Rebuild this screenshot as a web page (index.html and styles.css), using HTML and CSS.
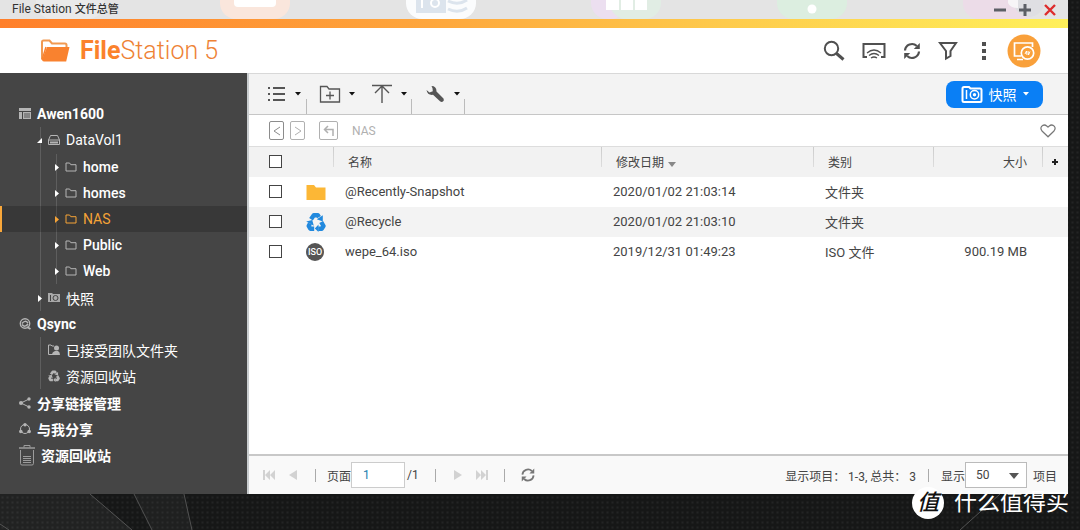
FILE: index.html
```html
<!DOCTYPE html>
<html lang="zh-CN">
<head>
<meta charset="utf-8">
<title>File Station 文件总管</title>
<link rel="stylesheet" href="styles.css">
</head>
<body>
<svg class="defs" width="0" height="0" aria-hidden="true">
  <symbol id="caret" viewBox="0 0 6 4"><path d="M0 0h6L3 3.6z" fill="currentColor"/></symbol>
  <symbol id="folder" viewBox="0 0 12 12"><path d="M1 10V2h3.6l1.2 1.7H11V10z" fill="none" stroke="currentColor"/></symbol>
  <symbol id="closed" viewBox="0 0 8 10"><path d="M4 2l4 3.500L4 9z" fill="currentColor"/></symbol>
  <symbol id="open" viewBox="0 0 8 10"><path d="M8 3v5H3z" fill="currentColor"/></symbol>
  <symbol id="refresh" viewBox="0 0 20 20"><g fill="none" stroke="currentColor" stroke-width="2.200"><path d="M3 9.500a7 7 0 0 1 11.800-4.500M17 10.500a7 7 0 0 1-11.800 4.500"/></g><path d="M17.800 2v6h-6zM2.200 18v-6h6z" fill="currentColor"/></symbol>
  <symbol id="camera" viewBox="0 0 22 18"><g fill="none" stroke="currentColor"><path stroke-width="2" d="M3 2h5l1.500 1.500H19q1.500 0 1.500 1.500v10.500q0 1.500-1.500 1.500H3q-1.500 0-1.500-1.500v-12Q1.500 2 3 2z"/><path stroke-width="1.500" d="M5.500 5v9"/><circle cx="13.500" cy="9.800" r="4.200" stroke-width="1.500"/></g><circle cx="13.500" cy="9.800" r="1.700" fill="currentColor"/></symbol>
  <symbol id="recycle" viewBox="0 0 20 20"><g fill="none" stroke="currentColor" stroke-width="4.400" stroke-linejoin="round"><path d="M5 7.200L7.800 3.200h4L13 5.200"/><path d="M15.200 10l2.300 4-1.800 2.700h-3.500"/><path d="M8.200 16.700H4.300L2.700 14l1.300-2.500"/></g><path d="M16.800 3.200v6.200l-6-2.200zM12.500 12.500v7.500l-3.700-3.500zM.2 9.500l6-1.500 1.600 5.800z" fill="currentColor"/></symbol>
</svg>

<div class="window">
  <header class="titlebar">
    <svg class="ghosts" viewBox="0 0 1068 19" preserveAspectRatio="xMinYMin slice" aria-hidden="true">
      <rect x="36" y="-40" width="68" height="59" rx="16" fill="#eaeaea"/>
      <rect x="220" y="-50" width="70" height="69" rx="16" fill="#fae6dc"/><rect x="234" y="-10" width="42" height="17" rx="4" fill="#fff"/>
      <rect x="406" y="-50" width="70" height="69" rx="16" fill="#fbfcfd"/><path d="M416 0h30v13h-30z" fill="#dce4ed"/><path d="M422 0v8" stroke="#fff" stroke-width="2"/><circle cx="435" cy="3" r="4" fill="none" stroke="#fff" stroke-width="2"/><path d="M448 1q10 5 19-1M448 9q10 5 19-1" fill="none" stroke="#dce4ed" stroke-width="3"/>
      <rect x="591" y="-50" width="36" height="69" rx="16" fill="#ecdff0"/><rect x="610" y="-50" width="51" height="69" rx="16" fill="#e1ede4"/><path d="M606 0h13v10h-13zM621 0h12v10h-12zM635 0h12v10h-12z" fill="#fff"/>
      <rect x="777" y="-50" width="70" height="69" rx="16" fill="#dceee0"/><circle cx="812" cy="9" r="4.500" fill="#fff"/>
      <rect x="963" y="-50" width="76" height="69" rx="16" fill="#ecdce8"/><circle cx="1029" cy="2" r="15" fill="#dfdfe3"/><path d="M1008 0h10v8q-8 0-10-5z" fill="#f7f5f7"/>
    </svg>
    <h1 class="title">File Station <b>文件总管</b></h1>
    <div class="controls">
      <button aria-label="最小化"><svg width="12" height="12"><path d="M0 6h12" stroke="#5c5f66" stroke-width="3"/></svg></button>
      <button aria-label="最大化"><svg width="12" height="12"><path d="M0 6h12M6 0v12" stroke="#5c5f66" stroke-width="3"/></svg></button>
      <button aria-label="关闭"><svg width="12" height="12"><path d="M1 1l10 10M11 1L1 11" stroke="#dd2c2c" stroke-width="2.400"/></svg></button>
    </div>
  </header>
  <div class="stripe"></div>

  <div class="brandbar">
    <div class="brand">
      <svg width="30" height="24" viewBox="0 0 30 24"><path d="M2 20V3q0-1.500 1.500-1.500h6L12 4.500h13q1.500 0 1.500 1.500v2" fill="none" stroke="#f19a52" stroke-width="2"/><path d="M7 8h22.500l-3.300 14.500H4q-2.200 0-1.600-2.500z" fill="#f9822f"/><path d="M2 21L6 8" stroke="#f9822f" stroke-width="1.500"/></svg>
      <span class="wordmark"><b>File</b>Station 5</span>
    </div>
    <div class="tools">
      <button class="wide" aria-label="搜索"><svg width="22" height="22" viewBox="0 0 22 22" fill="none" stroke="currentColor"><circle cx="8.500" cy="8.500" r="6.700" stroke-width="2"/><path d="M13.500 13.500l7 6" stroke-width="3"/></svg></button>
      <button class="wide" aria-label="投放"><svg width="24" height="18" viewBox="0 0 24 18" fill="none" stroke="currentColor"><path d="M5 15H1.500V2h21v13H19" stroke-width="2"/><path d="M5 11q7-6 14 0M7 13.500q5-4 10 0M9 16q3-2 6 0" stroke-width="1.300"/></svg></button>
      <button aria-label="刷新"><svg width="20" height="20"><use href="#refresh"/></svg></button>
      <button aria-label="筛选"><svg width="20" height="20" viewBox="0 0 20 20" fill="none" stroke="currentColor" stroke-width="2"><path d="M2 2h16l-5.500 8v5L8 17.500V10z"/></svg></button>
      <button aria-label="更多"><svg width="6" height="20" fill="currentColor"><path d="M1 1h4v4H1zM1 8h4v4H1zM1 15h4v4H1z"/></svg></button>
      <button class="remote" aria-label="远程连接"><svg width="34" height="34" viewBox="0 0 34 34" fill="none" stroke="#fff"><circle cx="17" cy="17" r="16.500" fill="#f9a03a" stroke="none"/><path d="M14 22H7.500V9h18v4M10 25.500h6" stroke-width="1.700"/><circle cx="20.500" cy="19" r="6.200" stroke-width="1.700" fill="#f9a03a"/><path d="M18 20l1.500-3 .5 4M21 17l.5 4 1.500-3.500" stroke-width="1"/></svg></button>
    </div>
  </div>

  <div class="workspace">
    <nav class="sidebar" aria-label="文件夹">
      <ul>
        <li>
          <a class="row root" href="#"><svg width="12" height="12" fill="#b5b5b5"><path d="M0 0h12v3H0zM0 4h3v7H0zM4 4h8v7H4z"/><path d="M6 5v5M8 5v5M10 5v5" stroke="#555"/></svg>Awen1600</a>
          <ul class="branch">
            <li>
              <a class="row volume" href="#"><svg class="arrow" width="8" height="10"><use href="#open"/></svg><svg width="12" height="12" fill="none" stroke="#b5b5b5"><path d="M.5 6L2.500 1.500h7l2 4.500v4.500H.5zM.5 6h11"/><path d="M2 8.500h8" stroke-width="2"/></svg>DataVol1</a>
              <ul class="branch inner">
                <li><a class="row share" href="#"><svg class="arrow" width="8" height="10"><use href="#closed"/></svg><svg width="12" height="12"><use href="#folder"/></svg>home</a></li>
                <li><a class="row share" href="#"><svg class="arrow" width="8" height="10"><use href="#closed"/></svg><svg width="12" height="12"><use href="#folder"/></svg>homes</a></li>
                <li><a class="row share selected" href="#" aria-current="page"><svg class="arrow" width="8" height="10"><use href="#closed"/></svg><svg width="12" height="12"><use href="#folder"/></svg>NAS</a></li>
                <li><a class="row share" href="#"><svg class="arrow" width="8" height="10"><use href="#closed"/></svg><svg width="12" height="12"><use href="#folder"/></svg>Public</a></li>
                <li><a class="row share" href="#"><svg class="arrow" width="8" height="10"><use href="#closed"/></svg><svg width="12" height="12"><use href="#folder"/></svg>Web</a></li>
              </ul>
            </li>
            <li><a class="row volume" href="#"><svg class="arrow" width="8" height="10"><use href="#closed"/></svg><svg width="12" height="12"><path d="M0 1h4l1 1h7v8H0z" fill="#a9a9a9"/><path d="M2.500 3v6" stroke="#454545"/><circle cx="7.500" cy="6" r="2.500" fill="none" stroke="#454545"/></svg>快照</a></li>
          </ul>
        </li>
        <li class="sync">
          <a class="row root" href="#"><svg width="12" height="12" fill="none" stroke="#b5b5b5"><circle cx="6" cy="5.500" r="4.700" stroke-width="1.400"/><path d="M3 5.500q3-4 6-.5M9 6q-3 4-6 .5" stroke-width="1.500"/><path d="M8 9l3.500 2" stroke-width="2"/></svg>Qsync</a>
          <ul class="branch">
            <li><a class="row leaf" href="#"><svg width="12" height="12"><path d="M6 2H4L3 1H.5v9.500H5" fill="none" stroke="#b5b5b5"/><circle cx="8.500" cy="4" r="2.500" fill="#b5b5b5"/><path d="M4 11q0-3 3-4h3q2 1 2 4z" fill="#b5b5b5"/></svg>已接受团队文件夹</a></li>
            <li><a class="row leaf" href="#"><svg width="12" height="12"><use href="#recycle"/></svg>资源回收站</a></li>
          </ul>
        </li>
        <li><a class="row root" href="#"><svg width="12" height="12" fill="#b5b5b5"><path d="M10 2L2 6l8 4" fill="none" stroke="#b5b5b5"/><circle cx="2" cy="6" r="2"/><circle cx="10" cy="2" r="1.700"/><circle cx="10" cy="10" r="1.700"/></svg>分享链接管理</a></li>
        <li><a class="row root" href="#"><svg width="12" height="12" fill="#b5b5b5"><circle cx="6" cy="6" r="4.500" fill="none" stroke="#b5b5b5"/><circle cx="6" cy="1.700" r="1.700"/><circle cx="1.800" cy="8.500" r="1.800"/><circle cx="10.200" cy="8.500" r="1.800"/></svg>与我分享</a></li>
        <li><a class="row root" href="#"><svg width="16" height="22" fill="none" stroke="#9c9c9c"><path d="M0 4h16" stroke-width="1.500"/><path d="M5 3.500V1.500h6v2M1.500 6v13.500q0 1.500 1.500 1.500h10q1.500 0 1.500-1.500V6M4 12.500h8M4 14.500h8M4 16.500h8M4 18.500h8"/></svg>资源回收站</a></li>
      </ul>
    </nav>

    <main class="panel">
      <div class="toolbar">
        <div class="group"><button class="drop" aria-label="查看"><svg width="22" height="20" fill="currentColor"><path d="M3 3h2v2H3zM8 3h12v2H8zM3 9h2v2H3zM8 9h12v2H8zM3 15h2v2H3zM8 15h12v2H8z"/></svg><svg class="caret" width="6" height="4"><use href="#caret"/></svg></button></div>
        <div class="group">
          <button class="drop" aria-label="创建文件夹"><svg width="22" height="20" fill="none" stroke="currentColor" stroke-width="1.300"><path d="M1.500 18V2.500H8l2 2.500h10.500v13zM7 11.500h8M11 7.500v8"/></svg><svg class="caret" width="6" height="4"><use href="#caret"/></svg></button>
          <button class="drop" aria-label="上传"><svg width="22" height="20" fill="none" stroke="currentColor" stroke-width="1.400"><path d="M1 1.500h20M11 2v17M4 9l7-7 7 7"/></svg><svg class="caret" width="6" height="4"><use href="#caret"/></svg></button>
        </div>
        <div class="group"><button class="drop" aria-label="工具"><svg width="22" height="20"><path d="M7.500 2q5 0 5 5.500l7 7q1 2-.5 3t-3-.3L9 10.800Q3.500 11.500 2.500 6l3 2.500 3.300-1.300-.3-3z" fill="currentColor"/></svg><svg class="caret" width="6" height="4"><use href="#caret"/></svg></button></div>
        <button class="snapshot"><svg width="22" height="18"><use href="#camera"/></svg>快照<svg width="6" height="4"><use href="#caret"/></svg></button>
      </div>

      <div class="pathbar">
        <button class="step back" aria-label="后退"><svg width="8" height="10"><path d="M7 1L1 5l6 4" fill="none" stroke="currentColor"/></svg></button>
        <button class="step" aria-label="前进"><svg width="8" height="10"><path d="M1 1l6 4-6 4" fill="none" stroke="currentColor"/></svg></button>
        <button class="step up" aria-label="上一级"><svg width="12" height="12"><path d="M5 1L1.500 4.500 5 8M2 4.500h8V11" fill="none" stroke="currentColor" stroke-width="1.500"/></svg></button>
        <span class="crumb">NAS</span>
        <button class="fav" aria-label="收藏"><svg width="16" height="14"><path d="M8 12.800L2 7Q0 4.500 1.600 2.400 4-.3 7 2.200l1 1 1-1q3-2.500 5.400.2Q16 4.500 14 7z" fill="none" stroke="#777" stroke-width="1.200"/></svg></button>
      </div>

      <table class="files">
        <colgroup><col class="c-check"><col class="c-icon"><col><col class="c-date"><col class="c-type"><col class="c-size"><col class="c-add"></colgroup>
        <thead>
          <tr>
            <th class="check"><input type="checkbox" aria-label="全选"></th>
            <th></th>
            <th class="ruled">名称</th>
            <th class="ruled">修改日期<svg class="sort" width="8" height="5"><path d="M0 0h8L4 5z" fill="#888"/></svg></th>
            <th class="ruled">类别</th>
            <th class="ruled num">大小</th>
            <th class="ruled add"><button aria-label="添加列"><svg width="6" height="6"><path d="M0 3h6M3 0v6" stroke="#222" stroke-width="2"/></svg></button></th>
          </tr>
        </thead>
        <tbody>
          <tr>
            <td class="check"><input type="checkbox" aria-label="@Recently-Snapshot"></td>
            <td class="icon"><svg width="20" height="20"><path d="M.5 3h7.500l2 2.500h9.500V18H.5z" fill="#fcb736"/></svg></td>
            <td>@Recently-Snapshot</td><td>2020/01/02 21:03:14</td><td>文件夹</td><td class="num"></td><td></td>
          </tr>
          <tr>
            <td class="check"><input type="checkbox" aria-label="@Recycle"></td>
            <td class="icon recycle"><svg width="20" height="20"><use href="#recycle"/></svg></td>
            <td>@Recycle</td><td>2020/01/02 21:03:10</td><td>文件夹</td><td class="num"></td><td></td>
          </tr>
          <tr>
            <td class="check"><input type="checkbox" aria-label="wepe_64.iso"></td>
            <td class="icon"><span class="iso">ISO</span></td>
            <td>wepe_64.iso</td><td>2019/12/31 01:49:23</td><td>ISO 文件</td><td class="num">900.19 MB</td><td></td>
          </tr>
        </tbody>
      </table>

      <footer class="pager">
        <button class="first" aria-label="首页" disabled><svg width="12" height="10"><path d="M0 0h2v10H0zM7 0v10L2 5zM12 0v10L7 5z" fill="currentColor"/></svg></button>
        <button aria-label="上一页" disabled><svg width="12" height="10"><path d="M10 0v10L2 5z" fill="currentColor"/></svg></button>
        <span class="bar"></span>
        <label class="page">页面<input type="text" value="1"></label>
        <span class="total">/1</span>
        <span class="bar"></span>
        <button aria-label="下一页" disabled><svg width="12" height="10"><path d="M2 0v10l8-5z" fill="currentColor"/></svg></button>
        <button aria-label="末页" disabled><svg width="12" height="10"><path d="M10 0h2v10h-2zM0 0v10l5-5zM5 0v10l5-5z" fill="currentColor"/></svg></button>
        <span class="bar"></span>
        <button class="reload" aria-label="刷新"><svg width="16" height="16"><use href="#refresh"/></svg></button>
        <span class="summary">显示项目： 1-3, 总共： 3</span>
        <span class="bar"></span>
        <label class="size">显示<span class="pick"><select><option>50</option></select><svg width="10" height="6"><path d="M0 0h10L5 6z" fill="#555"/></svg></span>项目</label>
      </footer>
    </main>
  </div>
</div>

<svg class="streaks" viewBox="0 0 1080 36" preserveAspectRatio="none" aria-hidden="true">
  <path d="M0 0h90l42 36H0z" fill="#fff" opacity=".05"/><path d="M134 0h50l8 36h-40z" fill="#fff" opacity=".04"/>
  <path d="M90 0l42 36M134 0l18 36M184 0l8 36M0 30l9 6M1000 0l-40 36" stroke="#777" fill="none" opacity=".6"/>
</svg>
<div class="watermark"><span class="seal">值</span>什么值得买</div>
</body>
</html>
```
FILE: styles.css
```css
* { box-sizing: border-box; }

body {
  margin: 0;
  min-height: 100vh;
  padding: 0 12px 36px 0;
  display: flex;
  flex-direction: column;
  position: relative;
  overflow-x: hidden;
  background: radial-gradient(circle, #232425, #161717 2px) 0 0 / 5px 5px;
  font-family: Roboto, "Noto Sans CJK SC", sans-serif;
  font-size: 13px;
  color: #444;
}

button {
  display: flex;
  align-items: center;
  justify-content: center;
  padding: 0;
  border: 0;
  background: none;
  color: inherit;
  font: inherit;
}

svg { display: block; flex: none; }
.defs { position: absolute; }
ul { list-style: none; margin: 0; padding: 0; }

.window {
  flex: 1;
  display: flex;
  flex-direction: column;
  background: #fff;
}

/* Title bar */
.titlebar {
  position: relative;
  display: flex;
  align-items: center;
  justify-content: space-between;
  height: 19px;
  padding: 0 12px;
  background: #e4e4e4;
  overflow: hidden;
}
.ghosts { position: absolute; left: 0; top: 0; width: 100%; height: 19px; }
.title { position: relative; margin: 0; font-size: 12px; font-weight: 400; line-height: 16px; color: #333; }
.title b { font-size: 11px; font-weight: 500; }
.controls { position: relative; display: flex; gap: 13px; }
.stripe { height: 9px; background: linear-gradient(90deg, #ff7f2a, #fea63c 40%, #fecb4c 68%, #fff05a); }

/* Brand bar */
.brandbar {
  display: flex;
  align-items: center;
  justify-content: space-between;
  height: 45px;
  padding: 0 22px 0 40px;
}
.brand { display: flex; align-items: center; gap: 10px; }
.wordmark { font-size: 25px; line-height: 32px; font-weight: 300; color: #ee8235; }
.wordmark b { font-weight: 700; color: #fb822c; }
.tools { display: flex; align-items: center; color: #505050; }
.tools button { width: 36px; height: 36px; }
.tools .wide { width: 40px; }
.tools .remote { width: 44px; }

.workspace { flex: 1; display: flex; }

/* Folder tree */
.sidebar {
  flex: none;
  width: 247px;
  padding-top: 28px;
  background: #454545;
}
.row {
  display: flex;
  align-items: center;
  gap: 6px;
  height: 26px;
  padding-left: 19px;
  font-size: 14px;
  color: #fff;
  text-decoration: none;
}
.root { font-weight: 700; }
.volume { padding-left: 34px; }
.share { padding-left: 51px; font-weight: 500; }
.leaf { padding-left: 48px; }
.row svg { color: #b5b5b5; }
.row .arrow { color: #fff; }
.branch { background: linear-gradient(#5e5e5e, #5e5e5e) 40px 0 / 1px 100% no-repeat; }
.inner { background-position: 56px 0; margin: 1px 0; }
.sync { margin-bottom: 1px; }
.selected { background: rgba(0, 0, 0, .18); box-shadow: inset 2px 0 #f9a73a; font-weight: 400; }
.selected, .selected svg, .selected .arrow { color: #f5a337; }

/* File panel */
.panel {
  flex: 1;
  min-width: 0;
  display: flex;
  flex-direction: column;
  border-left: 2px solid #c9cdcf;
}
.toolbar {
  display: flex;
  height: 42px;
  padding: 0 25px 0 4px;
  background: #f3f3f3;
  border-top: 1px solid #d8d8d8;
  border-bottom: 1px solid #c6c6c6;
  color: #555;
}
.group {
  display: flex;
  padding-right: 1px;
  background: linear-gradient(#bbb, #bbb) 100% 100% / 1px 15px no-repeat;
}
.group:first-child { padding-right: 2px; }
.drop { width: 52px; gap: 8px; padding-left: 7px; }
.caret { color: #111; }
.snapshot {
  align-self: center;
  margin-left: auto;
  width: 97px;
  height: 27px;
  gap: 6px;
  border-radius: 8px;
  background: #0a7ff5;
  color: #fff;
  font-size: 14px;
}

.pathbar {
  display: flex;
  align-items: center;
  gap: 6px;
  height: 31px;
  padding: 0 12px 0 20px;
  color: #b0b0b0;
  font-size: 12px;
}
.step { width: 15px; height: 19px; border: 1px solid currentColor; border-radius: 2px; }
.back { color: #8c8c8c; }
.up { width: 19px; margin: 0 8px; }
.fav { margin-left: auto; }

.files { width: 100%; border-collapse: collapse; table-layout: fixed; }
.c-check { width: 52px; }
.c-icon { width: 32px; }
.c-date { width: 212px; }
.c-type { width: 120px; }
.c-size { width: 109px; }
.c-add { width: 26px; }
.files th, .files td { height: 30px; padding: 0 0 0 12px; text-align: left; font-weight: 400; }
.files th { padding-left: 15px; font-size: 12px; background: #f2f2f2; border-top: 1px solid #ddd; }
.files .ruled { background: linear-gradient(#ccc, #ddd) 0 0 / 1px 20px no-repeat #f2f2f2; }
.files .check { padding: 0 0 0 20px; }
.files .icon { padding: 0 0 0 5px; }
.files .num { text-align: right; padding-right: 15px; }
.files .add { padding: 0 0 0 10px; }
.files tbody tr:nth-child(even) { background: #f3f3f3; }
.files input {
  display: block;
  appearance: none;
  width: 13px;
  height: 13px;
  margin: 0;
  border: 1px solid #444;
  background: #fff;
}
.sort { display: inline-block; margin-left: 4px; vertical-align: middle; }
.recycle { color: #2189de; }
.iso {
  display: grid;
  place-items: center;
  width: 18px;
  height: 18px;
  border-radius: 50%;
  background: #555;
  color: #fff;
  font-size: 9px;
  font-weight: 500;
}

/* Pager */
.pager {
  display: flex;
  align-items: center;
  height: 40px;
  margin-top: auto;
  padding: 0 11px 0 14px;
  border-top: 2px solid #c8c8c8;
  background: #f9f9f9;
  font-size: 12px;
  white-space: nowrap;
}
.pager button { color: #d2d2d2; }
.pager .first { margin-right: 12px; }
.pager button + button { margin-left: 12px; }
.pager .first + button { margin-left: 0; }
.bar { width: 1px; height: 13px; margin: 0 11px 0 16px; background: #aaa; }
.total + .bar { margin: 0 16px; }
.pager .reload { margin-left: 4px; color: #777; }
.page { display: flex; align-items: center; }
.page input {
  width: 54px;
  height: 26px;
  padding: 0 11px;
  border: 1px solid #ccc;
  background: #fff;
  color: #237fb0;
  font: inherit;
}
.total { margin-left: 2px; }
.summary { margin-left: auto; }
.summary + .bar { margin: 0 12px; }
.size { display: flex; align-items: center; }
.pick { position: relative; margin-right: 6px; }
.pick select {
  display: block;
  appearance: none;
  width: 62px;
  height: 26px;
  padding: 0 10px;
  border: 1px solid #bbb;
  border-radius: 0;
  background: #fff;
  color: #444;
  font: inherit;
}
.pick svg { position: absolute; right: 8px; top: 11px; }

/* Desktop */
.streaks { position: absolute; left: 0; bottom: 0; width: 100%; height: 36px; }
.watermark {
  position: absolute;
  right: 11px;
  bottom: 11px;
  display: flex;
  align-items: center;
  gap: 10px;
  color: #fff;
  font-size: 23px;
  line-height: 32px;
}
.seal {
  display: grid;
  place-items: center;
  width: 32px;
  height: 32px;
  border-radius: 50%;
  background: #fff;
  color: #111;
  font-size: 22px;
  font-style: italic;
  font-weight: 500;
}
```
